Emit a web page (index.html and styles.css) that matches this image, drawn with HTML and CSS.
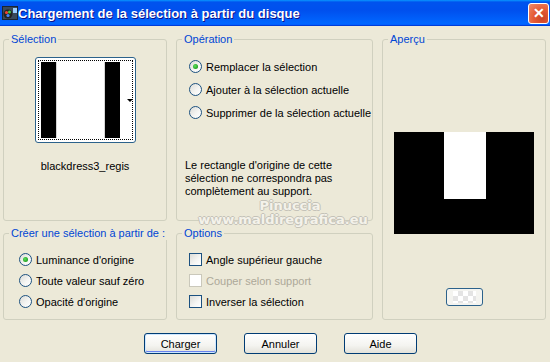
FILE: index.html
```html
<!DOCTYPE html>
<html lang="fr">
<head>
<meta charset="UTF-8">
<title>Chargement de la sélection à partir du disque</title>
<link rel="stylesheet" href="styles.css">
</head>
<body>

<div class="dialog">
    <div class="titlebar">
        <svg class="app-icon" width="16" height="16" viewBox="0 0 16 16">
            <rect x="0.5" y="1.5" width="15" height="13" fill="#3a4a5a" stroke="#1a2430"/>
            <circle cx="6" cy="9" r="4.5" fill="#222"/>
            <circle cx="4.5" cy="7.5" r="1.6" fill="#e43"/>
            <circle cx="7.5" cy="7" r="1.5" fill="#4c4"/>
            <circle cx="6" cy="10.5" r="1.6" fill="#48f"/>
            <rect x="11" y="3" width="4" height="5" fill="#9cf"/>
        </svg>
        <span class="title">Chargement de la sélection à partir du disque</span>
        <button class="close" aria-label="Fermer"><span>✕</span></button>
    </div>

    <div class="content">
        <fieldset class="group sel-group">
            <legend>Sélection</legend>
            <div class="thumb">
                <div class="thumb-focus">
                    <div class="thumb-img"></div>
                </div>
                <span class="thumb-arrow"></span>
            </div>
            <div class="thumb-name">blackdress3_regis</div>
        </fieldset>

        <fieldset class="group op-group">
            <legend>Opération</legend>
            <div class="opt-list op-list">
                <label class="opt"><span class="radio checked"></span>Remplacer la sélection</label>
                <label class="opt"><span class="radio"></span>Ajouter à la sélection actuelle</label>
                <label class="opt"><span class="radio"></span>Supprimer de la sélection actuelle</label>
            </div>
            <p class="note">Le rectangle d'origine de cette sélection ne correspondra pas complètement au support.</p>
        </fieldset>

        <fieldset class="group preview-group">
            <legend>Aperçu</legend>
            <div class="preview">
                <div class="preview-white"></div>
            </div>
            <button class="bg-btn"><span class="checker"></span></button>
        </fieldset>

        <fieldset class="group src-group">
            <legend>Créer une sélection à partir de :</legend>
            <div class="opt-list small-list">
                <label class="opt"><span class="radio checked"></span>Luminance d'origine</label>
                <label class="opt"><span class="radio"></span>Toute valeur sauf zéro</label>
                <label class="opt"><span class="radio"></span>Opacité d'origine</label>
            </div>
        </fieldset>

        <fieldset class="group opts-group">
            <legend>Options</legend>
            <div class="opt-list small-list">
                <label class="opt"><span class="check"></span>Angle supérieur gauche</label>
                <label class="opt disabled"><span class="check"></span>Couper selon support</label>
                <label class="opt"><span class="check"></span>Inverser la sélection</label>
            </div>
        </fieldset>
    </div>

    <div class="actions">
        <button class="btn default">Charger</button>
        <button class="btn">Annuler</button>
        <button class="btn">Aide</button>
    </div>

    <div class="watermark">
        <span class="wm-name">Pinuccia</span>
        <span class="wm-site">www.maldiregrafica.eu</span>
    </div>
</div>

</body>
</html>
```

FILE: styles.css
```css
body {
    margin: 0;
    font-family: "Liberation Sans", Arial, sans-serif;
    font-size: 11px;
    color: #000;
    background: #ece9d8;
}
.dialog {
    position: relative;
    width: 550px;
    height: 362px;
    background: #ece9d8;
    overflow: hidden;
}
.titlebar {
    height: 26px;
    display: flex;
    align-items: center;
    padding: 0 1px 0 2px;
    background: linear-gradient(to bottom, #0997ff 0, #0053ee 8%, #0050ee 40%, #0066ff 88%, #0066ff 93%, #005bff 95%, #003dd7 96%, #003dd7 100%);
}
.app-icon {
    flex: none;
}
.title {
    flex: 1;
    color: #fff;
    font-weight: bold;
    font-size: 13px;
    text-shadow: 1px 1px #0f1089;
    white-space: nowrap;
}
.close {
    width: 21px;
    height: 21px;
    padding: 0;
    border: 1px solid #fff;
    border-radius: 3px;
    background: radial-gradient(circle at 70% 75%, #cc4426 0, #e45a35 45%, #f08c6b 100%);
    color: #fff;
    font-size: 14px;
    font-weight: bold;
    line-height: 19px;
    display: flex;
    align-items: center;
    justify-content: center;
}
.content {
    display: grid;
    grid-template-columns: 164px 197px 164px;
    grid-template-rows: 188px 93px;
    column-gap: 9px;
    row-gap: 6px;
    padding: 7px 0 0 3px;
}
.group {
    margin: 0;
    padding: 0;
    min-width: 0;
    border: 1px solid #d0d0bf;
    border-radius: 3px;
}
.group legend {
    margin-left: 5px;
    padding: 0 2px;
    line-height: 13px;
    color: #0046d5;
    white-space: nowrap;
}
.sel-group { grid-column: 1; grid-row: 1; }
.op-group { grid-column: 2; grid-row: 1; }
.preview-group { grid-column: 3; grid-row: 1 / 3; }
.src-group { grid-column: 1; grid-row: 2; }
.opts-group { grid-column: 2; grid-row: 2; }

/* miniature de la sélection */
.thumb {
    position: relative;
    width: 99px;
    height: 84px;
    margin: 11px auto 0;
    border: 1px solid #2c628b;
    border-radius: 3px;
    background: #fff;
    display: flex;
    align-items: center;
    justify-content: center;
}
.thumb-focus {
    width: 95px;
    height: 80px;
    box-sizing: border-box;
    border: 1px dotted #000;
    padding: 1px 2px;
}
.thumb-img {
    height: 100%;
    background: linear-gradient(to right, #000 0, #000 15px, #aaa 15px, #fff 16px, #fff 63px, #aaa 64px, #000 64px, #000 79px, #fff 79px);
}
.thumb-arrow {
    position: absolute;
    right: 2px;
    top: 41px;
    border-left: 3px solid transparent;
    border-right: 3px solid transparent;
    border-top: 3px solid #000;
}
.thumb-name {
    margin-top: 17px;
    line-height: 13px;
    text-align: center;
}

/* boutons radio et cases */
.opt-list {
    display: flex;
    flex-direction: column;
}
.op-list {
    padding: 9px 0 0 12px;
}
.op-list .opt {
    height: 23px;
}
.small-list .opt {
    height: 21px;
}
.src-group .small-list {
    padding: 9px 0 0 15px;
}
.opts-group .small-list {
    padding: 9px 0 0 12px;
}
.opt {
    display: flex;
    align-items: center;
    gap: 4px;
    white-space: nowrap;
}
.opt.disabled {
    color: #aca899;
}
.radio {
    flex: none;
    width: 13px;
    height: 13px;
    box-sizing: border-box;
    border: 1px solid #1c5180;
    border-radius: 50%;
    background: linear-gradient(135deg, #dcdcd7 0, #f6f6f4 60%, #fff 100%);
    display: flex;
    align-items: center;
    justify-content: center;
}
.radio.checked::after {
    content: "";
    width: 5px;
    height: 5px;
    border-radius: 50%;
    background: radial-gradient(circle at 40% 40%, #5ee05e 0, #21a121 70%);
}
.check {
    flex: none;
    width: 13px;
    height: 13px;
    box-sizing: border-box;
    border: 1px solid #1c5180;
    background: linear-gradient(135deg, #dcdcd7 0, #f6f6f4 60%, #fff 100%);
}
.disabled .check {
    border-color: #cac8bb;
    background: #fff;
}
.note {
    margin: 35px 0 0 8px;
    line-height: 13px;
    width: 175px;
}

/* aperçu */
.preview {
    width: 140px;
    height: 102px;
    margin: 86px auto 0;
    background: #000;
    position: relative;
}
.preview-white {
    position: absolute;
    left: 50px;
    top: 0;
    width: 42px;
    height: 67px;
    background: #fff;
}
.bg-btn {
    display: block;
    width: 37px;
    height: 18px;
    margin: 54px auto 0;
    padding: 2px 6px;
    border: 1px solid #2c628b;
    border-radius: 3px;
    background: #f4f4f0;
}
.checker {
    display: block;
    height: 100%;
    background-color: #fff;
    background-image: linear-gradient(45deg, #e4e4e4 25%, transparent 25%, transparent 75%, #e4e4e4 75%), linear-gradient(45deg, #e4e4e4 25%, transparent 25%, transparent 75%, #e4e4e4 75%);
    background-size: 10px 10px;
    background-position: 0 0, 5px 5px;
}

/* boutons du bas */
.actions {
    display: flex;
    justify-content: center;
    gap: 27px;
    margin-top: 13px;
    padding-left: 11px;
}
.btn {
    width: 73px;
    height: 21px;
    padding: 0;
    border: 1px solid #003c74;
    border-radius: 3px;
    background: linear-gradient(to bottom, #fff 0, #f4f4f0 60%, #e3e2da 100%);
    font-family: "Liberation Sans", Arial, sans-serif;
    font-size: 11px;
    color: #000;
}
.btn.default {
    box-shadow: inset 0 0 0 1px #cee7ff, inset 0 -1px 0 1px #6982ee;
}

/* filigrane */
.watermark {
    position: absolute;
    left: 192px;
    top: 199px;
    width: 182px;
    display: flex;
    flex-direction: column;
    align-items: center;
    font-family: "DejaVu Sans", sans-serif;
    font-weight: bold;
    color: #f4f2ea;
    text-shadow: -1px 0 #c4c2b8, 1px 0 #c4c2b8, 0 -1px #c4c2b8, 0 1px #c4c2b8;
    pointer-events: none;
}
.wm-name {
    font-size: 13px;
    line-height: 14px;
    margin-left: 14px;
}
.wm-site {
    font-size: 13px;
    line-height: 14px;
}
```
